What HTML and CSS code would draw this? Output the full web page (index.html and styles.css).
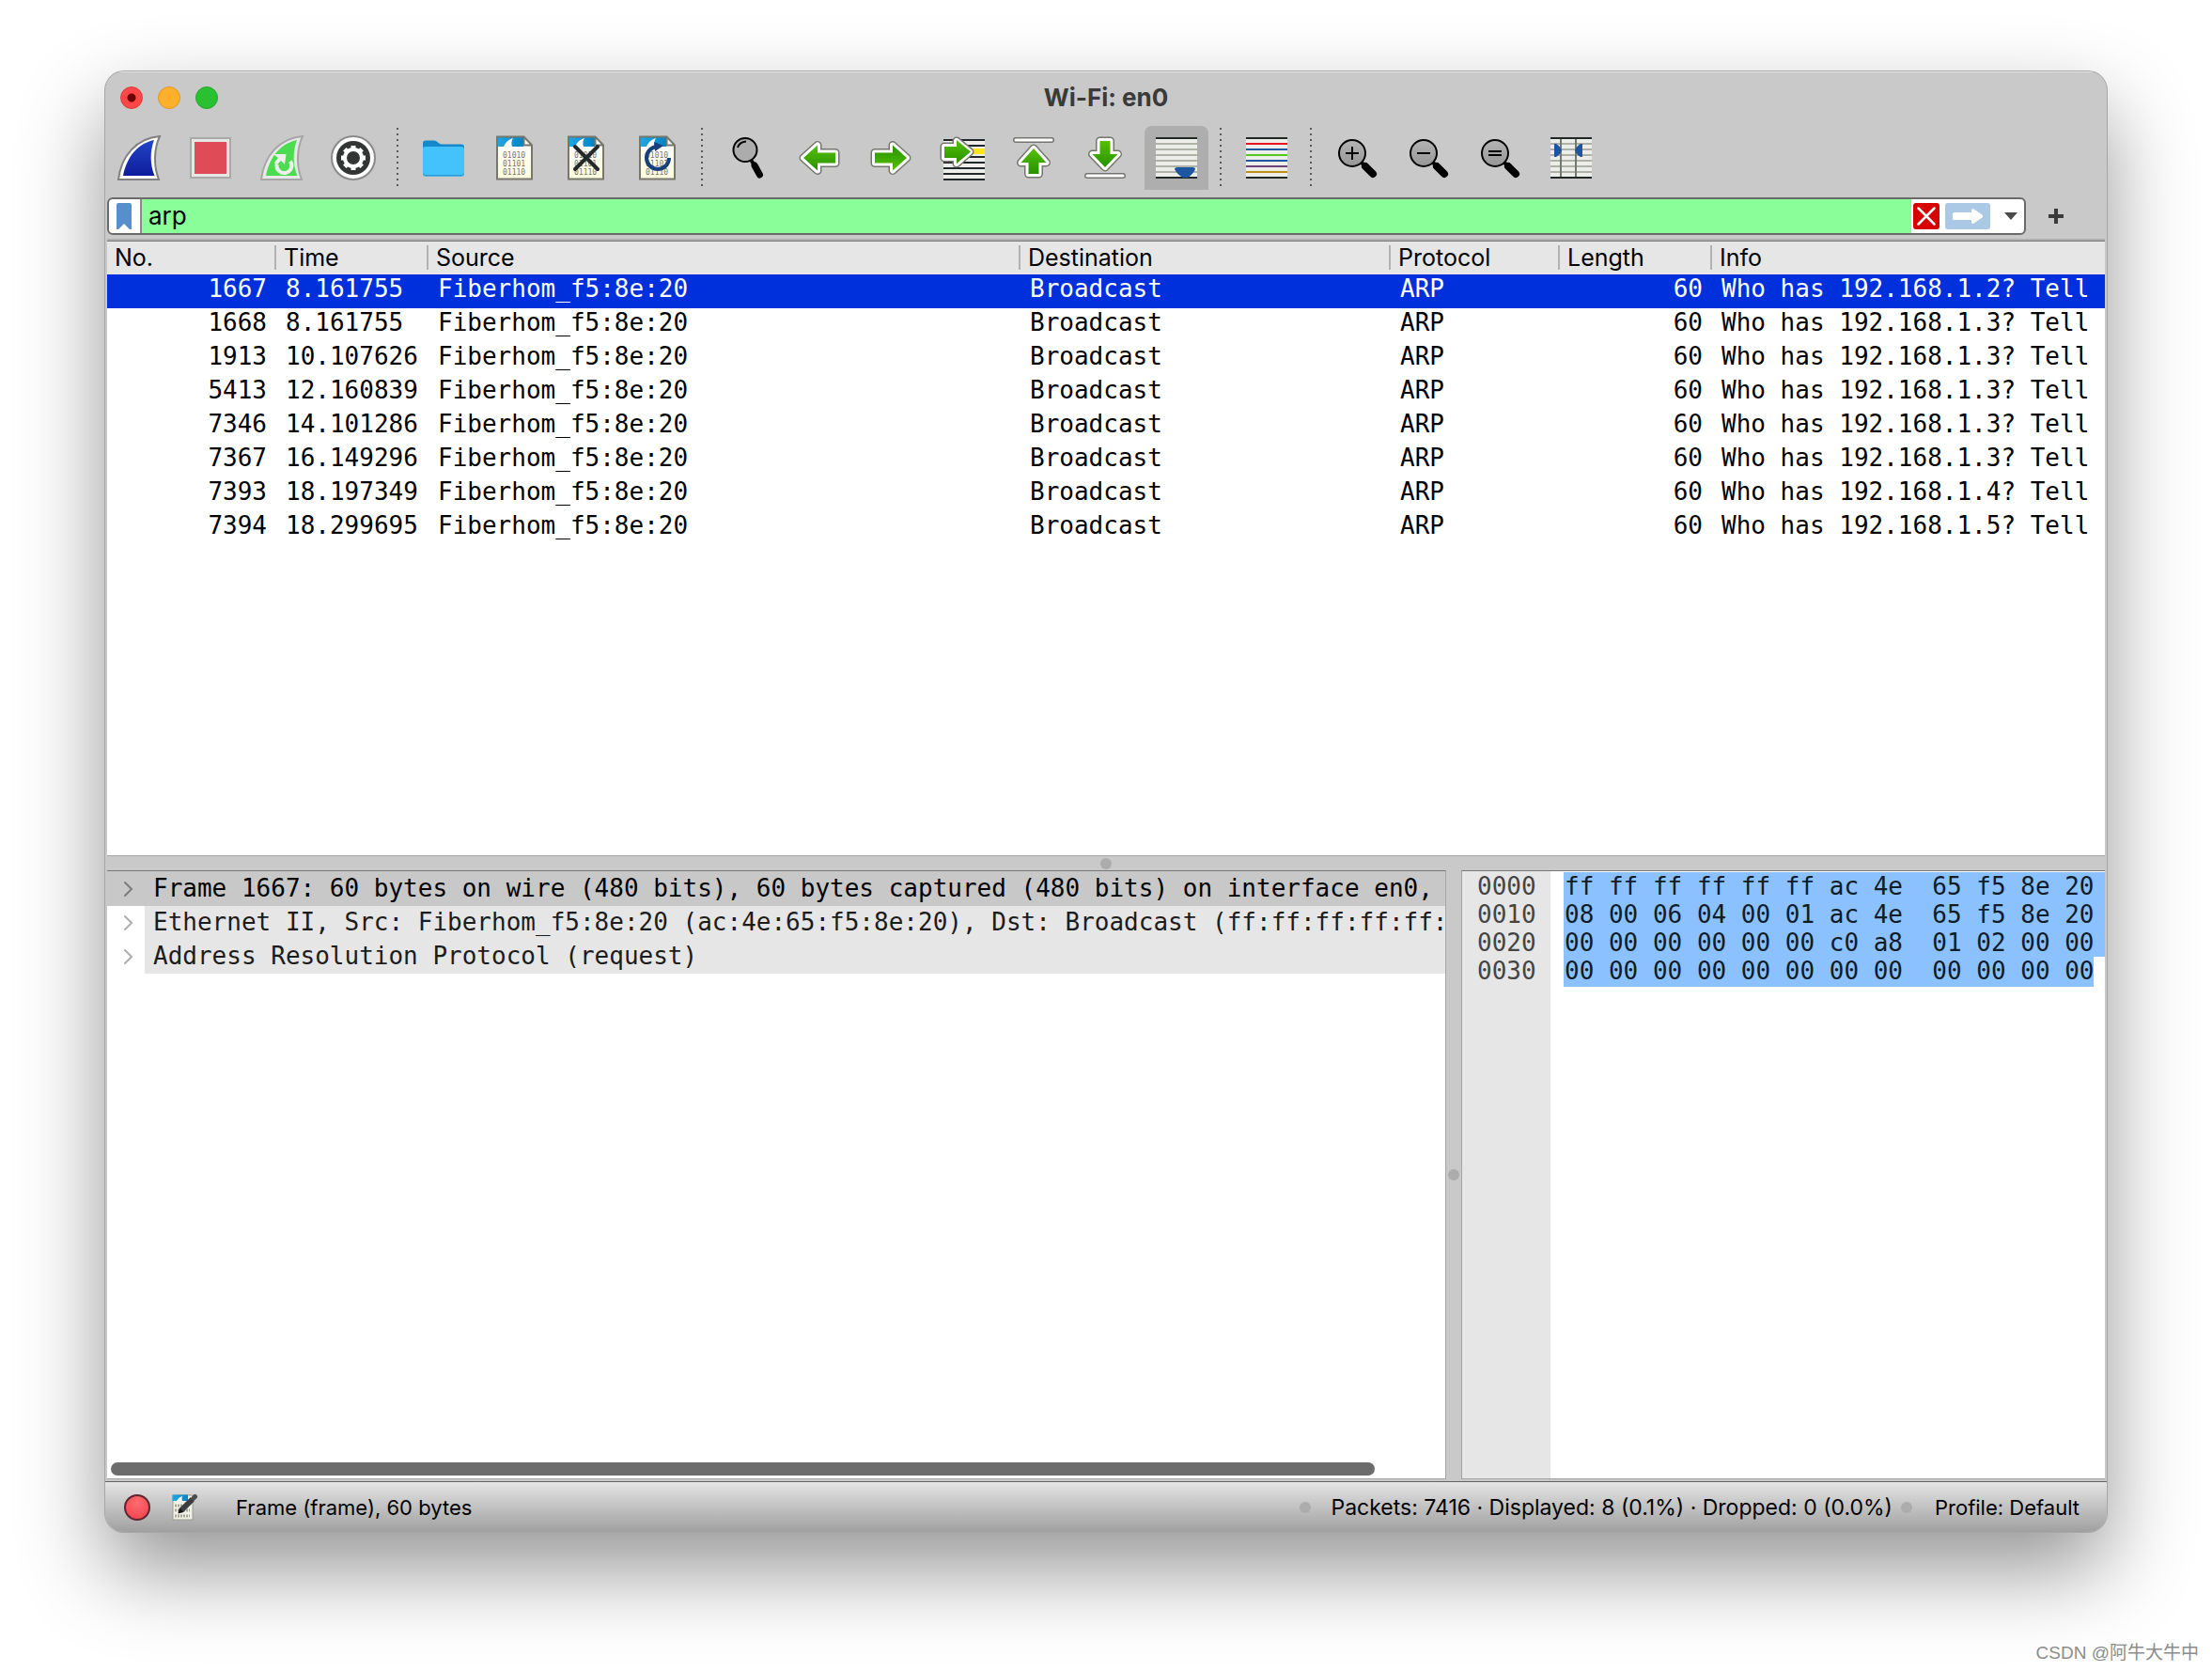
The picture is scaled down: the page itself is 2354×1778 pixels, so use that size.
FILE: index.html
```html
<!DOCTYPE html>
<html lang="en">
<head>
<meta charset="utf-8">
<title>Wi-Fi: en0</title>
<link rel="stylesheet" href="styles.css">
</head>
<body>
<svg class="defs" aria-hidden="true">
  <defs>
    <linearGradient id="g-blue" x1="0" y1="0" x2="0" y2="1"><stop offset="0" stop-color="#2346c8"/><stop offset="1" stop-color="#0d1c9c"/></linearGradient>
    <linearGradient id="g-green" x1="0" y1="0" x2="0" y2="1"><stop offset="0" stop-color="#55c000"/><stop offset="1" stop-color="#279200"/></linearGradient>
    <linearGradient id="g-cap" x1="0" y1="0" x2="1" y2="0"><stop offset="0" stop-color="#1fa8e4"/><stop offset="1" stop-color="#0583c4"/></linearGradient>
    <linearGradient id="g-paper" x1="0" y1="0" x2="0" y2="1"><stop offset="0" stop-color="#ffffff"/><stop offset="1" stop-color="#fdfbdc"/></linearGradient>
    <linearGradient id="g-lens" x1="0" y1="0" x2="0" y2="1"><stop offset="0" stop-color="#b4b4b4"/><stop offset="1" stop-color="#969696"/></linearGradient>
    <symbol id="file" viewBox="0 0 48 48">
      <path d="M5 1.5H33.500L42 10.500V46.500H5Z" fill="url(#g-paper)"/>
      <path d="M5 1.500H33V12H5Z" fill="url(#g-cap)"/>
      <path d="M12 12C14 7 18 4 22 3C20 6 20 9 21 12Z" fill="#fff"/>
      <path d="M33.500 1.500V10.500H42Z" fill="#fff"/>
      <path d="M5 1.500H33.500L42 10.500V46.500H5Z M33.500 1.500V10.500H42" fill="none" stroke="#77776c" stroke-width="2"/>
      <g class="bits"><text x="11" y="24">01010</text><text x="11" y="33">01101</text><text x="11" y="42">01110</text></g>
    </symbol>
    <symbol id="arrow" viewBox="0 0 48 48">
      <g stroke-linejoin="round">
        <path d="M7 24 22 10.500V18.500H41V29.500H22V37.500Z" fill="none" stroke="#757570" stroke-width="9"/>
        <path d="M7 24 22 10.500V18.500H41V29.500H22V37.500Z" fill="none" stroke="#fff" stroke-width="6"/>
        <path d="M7 24 22 10.500V18.500H41V29.500H22V37.500Z" fill="url(#g-green)"/>
      </g>
    </symbol>
    <symbol id="lens" viewBox="0 0 48 48">
      <circle cx="19" cy="19" r="14" fill="url(#g-lens)" stroke="#000" stroke-width="2"/>
      <path d="M29 29 33 33" stroke="#000" stroke-width="4"/>
      <path d="M33 33 41 41" stroke="#000" stroke-width="8" stroke-linecap="round"/>
    </symbol>
    <symbol id="sheet" viewBox="0 0 48 48">
      <path d="M2 2H46V46H2Z" fill="#edeeea"/>
      <path d="M2 9H46M2 15H46M2 21H46M2 27H46M2 33H46M2 39H46" stroke="#aeb1a5" stroke-width="2"/>
      <path d="M2 3H46M2 45H46" stroke="#202729" stroke-width="2"/>
    </symbol>
  </defs>
</svg>

<main class="window">
  <header class="titlebar">
    <div class="lights">
      <button class="light close" aria-label="Close"></button>
      <button class="light minimize" aria-label="Minimize"></button>
      <button class="light maximize" aria-label="Zoom window"></button>
    </div>
    <h1 class="title">Wi-Fi: en0</h1>
  </header>

  <nav class="toolbar" aria-label="Main toolbar">
    <button class="tool" aria-label="Start capture"><svg viewBox="0 0 48 48"><path d="M2 47C5 22 21 3 46 1C40 14 39 32 45 47Z" fill="#fff" stroke="#808080" stroke-width="2"/><path d="M7 43C11 23 22 9 40 5C35.500 17 35.500 31 40.500 43Z" fill="url(#g-blue)"/></svg></button>
    <button class="tool" aria-label="Stop capture"><svg viewBox="0 0 48 48"><path d="M3 3H45V45H3Z" fill="#e6e6e4" stroke="#a9a9a9" stroke-width="2"/><path d="M7 7H41V41H7Z" fill="#df4b57"/></svg></button>
    <button class="tool" aria-label="Restart capture"><svg viewBox="0 0 48 48"><path d="M2 47C5 22 21 3 46 1C40 14 39 32 45 47Z" fill="#e8e8e8" stroke="#a6a6a6" stroke-width="2"/><path d="M7 43C11 23 22 9 40 5C35.500 17 35.500 31 40.500 43Z" fill="#4bdc4f"/><path d="M18.500 31A8 8 0 1 0 33 27.500" fill="none" stroke="#eee" stroke-width="4"/><path d="M15 20H28.500L27 31 23 27 18 32 16 29 20 24Z" fill="#eee"/></svg></button>
    <button class="tool" aria-label="Capture options"><svg viewBox="0 0 48 48"><circle cx="24" cy="24" r="23" fill="#fff" stroke="#8a8a8a" stroke-width="2"/><circle cx="24" cy="24" r="18" fill="#333535"/><circle cx="24" cy="24" r="9" fill="none" stroke="#fff" stroke-width="4"/><g stroke="#fff" stroke-width="5"><path d="M24 11V16M24 32V37M11 24H16M32 24H37"/><path d="M24 11V16M24 32V37M11 24H16M32 24H37" transform="rotate(45 24 24)"/></g></svg></button>
    <span class="sep"></span>
    <button class="tool" aria-label="Open"><svg viewBox="0 0 48 48"><path d="M2 8Q2 5.500 5 5.500H14Q16 5.500 18 7.500T22 9.500H43Q46 9.500 46 12.500V20H2Z" fill="#1488c8"/><path d="M2 14Q2 12 5 12H43Q46 12 46 15V40Q46 43.500 43 43.500H5Q2 43.500 2 40Z" fill="#43c2fc"/><path d="M2 39V40Q2 43.500 5 43.500H43Q46 43.500 46 40V39Q46 42 43 42H5Q2 42 2 39Z" fill="#2a9ad8"/></svg></button>
    <button class="tool" aria-label="Save"><svg viewBox="0 0 48 48"><use href="#file"/></svg></button>
    <button class="tool" aria-label="Close file"><svg viewBox="0 0 48 48"><use href="#file"/><path d="M12 12 36 36M36 12 12 36" stroke="#23282b" stroke-width="4" stroke-linecap="round"/></svg></button>
    <button class="tool" aria-label="Reload"><svg viewBox="0 0 48 48"><use href="#file"/><path d="M24 12A12 12 0 1 0 36 24" fill="none" stroke="#173f7c" stroke-width="4"/><path d="M20 7 30 11 21 17Z" fill="#173f7c"/></svg></button>
    <span class="sep"></span>
    <button class="tool" aria-label="Find packet"><svg viewBox="0 0 48 48"><circle cx="21" cy="15.500" r="12.500" fill="#acacac" stroke="#000" stroke-width="2"/><path d="M13 13Q15 7 22 6.500" fill="none" stroke="#000" stroke-width="2"/><path d="M27 26 31 32" stroke="#000" stroke-width="4"/><path d="M31 32 36.500 42" stroke="#000" stroke-width="7" stroke-linecap="round"/></svg></button>
    <button class="tool" aria-label="Previous packet"><svg viewBox="0 0 48 48"><use href="#arrow"/></svg></button>
    <button class="tool" aria-label="Next packet"><svg viewBox="0 0 48 48"><use href="#arrow" transform="rotate(180 24 24)"/></svg></button>
    <button class="tool" aria-label="Go to packet"><svg viewBox="0 0 48 48"><path d="M4 4H48V48H4Z" fill="#edeeea"/><path d="M4 14H48V20H4Z" fill="#fde51a"/><path d="M4 5H48M4 11H48M4 23H48M4 29H48M4 35H48M4 41H48M4 47H48" stroke="#202729" stroke-width="2"/><g stroke-linejoin="round"><path d="M32 17.500 18 6V12H5V24H18V30Z" fill="none" stroke="#757570" stroke-width="9"/><path d="M32 17.500 18 6V12H5V24H18V30Z" fill="none" stroke="#fff" stroke-width="6"/><path d="M33 17.500 18 5V12H5V24H18V30Z" fill="url(#g-green)"/></g></svg></button>
    <button class="tool" aria-label="First packet"><svg viewBox="0 0 48 48"><path d="M5 5H43" stroke="#757570" stroke-width="6" stroke-linecap="round"/><path d="M5 5H43" stroke="#fff" stroke-width="3" stroke-linecap="round"/><g stroke-linejoin="round"><path d="M24 14 37.500 29H29.500V41H18.500V29H10.500Z" fill="none" stroke="#757570" stroke-width="9"/><path d="M24 14 37.500 29H29.500V41H18.500V29H10.500Z" fill="none" stroke="#fff" stroke-width="6"/><path d="M24 14 37.500 29H29.500V41H18.500V29H10.500Z" fill="url(#g-green)"/></g></svg></button>
    <button class="tool" aria-label="Last packet"><svg viewBox="0 0 48 48"><path d="M5 43H43" stroke="#757570" stroke-width="6" stroke-linecap="round"/><path d="M5 43H43" stroke="#fff" stroke-width="3" stroke-linecap="round"/><g stroke-linejoin="round"><path d="M24 34 37.500 20H29.500V6H18.500V20H10.500Z" fill="none" stroke="#757570" stroke-width="9"/><path d="M24 34 37.500 20H29.500V6H18.500V20H10.500Z" fill="none" stroke="#fff" stroke-width="6"/><path d="M24 34 37.500 20H29.500V6H18.500V20H10.500Z" fill="url(#g-green)"/></g></svg></button>
    <button class="tool pressed" aria-label="Auto scroll" aria-pressed="true"><svg viewBox="0 0 48 48"><use href="#sheet"/><path d="M22 36Q22 34 25 34H41Q44 34 44 36Q42 41 36 45H31Q25 42 22 36Z" fill="#1c55a0"/></svg></button>
    <span class="sep"></span>
    <button class="tool" aria-label="Colorize"><svg viewBox="0 0 48 48"><path d="M2 2H46V46H2Z" fill="#edeeea"/><g stroke-width="2"><path d="M2 3H46M2 45H46" stroke="#202729"/><path d="M2 9H46" stroke="#e8141f"/><path d="M2 15H46M2 27H46" stroke="#1f55a5"/><path d="M2 21H46" stroke="#54ca20"/><path d="M2 33H46" stroke="#6d4179"/><path d="M2 39H46" stroke="#bd8f12"/></g></svg></button>
    <span class="sep"></span>
    <button class="tool" aria-label="Zoom in"><svg viewBox="0 0 48 48"><use href="#lens"/><path d="M12 19H26M19 12V26" stroke="#000" stroke-width="2"/></svg></button>
    <button class="tool" aria-label="Zoom out"><svg viewBox="0 0 48 48"><use href="#lens"/><path d="M12 19H26" stroke="#000" stroke-width="2"/></svg></button>
    <button class="tool" aria-label="Normal size"><svg viewBox="0 0 48 48"><use href="#lens"/><path d="M12 17H26M12 21H26" stroke="#000" stroke-width="2"/></svg></button>
    <button class="tool" aria-label="Resize columns"><svg viewBox="0 0 48 48"><use href="#sheet"/><path d="M13 4V44M29 4V44" stroke="#757870" stroke-width="2"/><path d="M6 9H8Q12 11 14 16Q12 21 8 23H6ZM36 9H34Q30 11 28 16Q30 21 34 23H36Z" fill="#1c55a0"/></svg></button>
  </nav>

  <form class="filterbar">
    <div class="filterbox">
      <button type="button" class="mark" aria-label="Bookmarks"><svg viewBox="0 0 16 28" width="16" height="28"><path d="M0 2Q0 0 2 0H14Q16 0 16 2V28H14L8 22 2 28H0Z" fill="#568fcb"/></svg></button>
      <input class="filter" type="text" value="arp" aria-label="Display filter" spellcheck="false">
      <button type="button" class="clear" aria-label="Clear"><svg viewBox="0 0 28 28" width="28" height="28"><rect width="28" height="28" rx="3" fill="#d60000"/><path d="M5.500 5.500 22.500 22.500M22.500 5.500 5.500 22.500" stroke="#fff" stroke-width="2.500" stroke-linecap="round"/></svg></button>
      <button type="button" class="apply" aria-label="Apply"><svg viewBox="0 0 48 28" width="48" height="28"><rect width="48" height="28" rx="3" fill="#abc8e5"/><path d="M9.500 10H28V7.500Q28 6 30 6L40 13 40 15 30 22Q28 22 28 20.500V18H9.500Q8 18 8 16.500V11.500Q8 10 9.500 10Z" fill="#fff"/></svg></button>
      <button type="button" class="recent" aria-label="Recent filters"><svg viewBox="0 0 14 8" width="14" height="8"><path d="M0 0H14L7 8Z" fill="#4a4a4a"/></svg></button>
    </div>
    <button type="button" class="add" aria-label="Add filter button"><svg viewBox="0 0 16 16" width="16" height="16"><path d="M8 0V16M0 8H16" stroke="#3a3a3a" stroke-width="4"/></svg></button>
  </form>

  <section class="packets">
    <table class="list">
      <colgroup><col class="c-no"><col class="c-time"><col class="c-src"><col class="c-dst"><col class="c-proto"><col class="c-len"><col></colgroup>
      <thead><tr><th>No.</th><th>Time</th><th>Source</th><th>Destination</th><th>Protocol</th><th>Length</th><th>Info</th></tr></thead>
      <tbody>
        <tr class="selected"><td class="num">1667</td><td>8.161755</td><td>Fiberhom_f5:8e:20</td><td>Broadcast</td><td>ARP</td><td class="num">60</td><td>Who has 192.168.1.2? Tell</td></tr>
        <tr><td class="num">1668</td><td>8.161755</td><td>Fiberhom_f5:8e:20</td><td>Broadcast</td><td>ARP</td><td class="num">60</td><td>Who has 192.168.1.3? Tell</td></tr>
        <tr><td class="num">1913</td><td>10.107626</td><td>Fiberhom_f5:8e:20</td><td>Broadcast</td><td>ARP</td><td class="num">60</td><td>Who has 192.168.1.3? Tell</td></tr>
        <tr><td class="num">5413</td><td>12.160839</td><td>Fiberhom_f5:8e:20</td><td>Broadcast</td><td>ARP</td><td class="num">60</td><td>Who has 192.168.1.3? Tell</td></tr>
        <tr><td class="num">7346</td><td>14.101286</td><td>Fiberhom_f5:8e:20</td><td>Broadcast</td><td>ARP</td><td class="num">60</td><td>Who has 192.168.1.3? Tell</td></tr>
        <tr><td class="num">7367</td><td>16.149296</td><td>Fiberhom_f5:8e:20</td><td>Broadcast</td><td>ARP</td><td class="num">60</td><td>Who has 192.168.1.3? Tell</td></tr>
        <tr><td class="num">7393</td><td>18.197349</td><td>Fiberhom_f5:8e:20</td><td>Broadcast</td><td>ARP</td><td class="num">60</td><td>Who has 192.168.1.4? Tell</td></tr>
        <tr><td class="num">7394</td><td>18.299695</td><td>Fiberhom_f5:8e:20</td><td>Broadcast</td><td>ARP</td><td class="num">60</td><td>Who has 192.168.1.5? Tell</td></tr>
      </tbody>
    </table>
  </section>

  <div class="splitter horizontal"><span class="grip"></span></div>

  <div class="panes">
    <section class="details">
      <ul class="tree">
        <li class="node current"><svg class="chevron" viewBox="0 0 10 16"><path d="M1 1 8 8 1 15"/></svg><span class="label">Frame 1667: 60 bytes on wire (480 bits), 60 bytes captured (480 bits) on interface en0,</span></li>
        <li class="node"><svg class="chevron" viewBox="0 0 10 16"><path d="M1 1 8 8 1 15"/></svg><span class="label">Ethernet II, Src: Fiberhom_f5:8e:20 (ac:4e:65:f5:8e:20), Dst: Broadcast (ff:ff:ff:ff:ff:</span></li>
        <li class="node"><svg class="chevron" viewBox="0 0 10 16"><path d="M1 1 8 8 1 15"/></svg><span class="label">Address Resolution Protocol (request)</span></li>
      </ul>
      <div class="scroll"><span class="thumb"></span></div>
    </section>
    <div class="splitter vertical"><span class="grip"></span></div>
    <section class="hex">
      <div class="offsets"><div>0000</div><div>0010</div><div>0020</div><div>0030</div></div>
      <div class="bytes">
        <div class="line">ff ff ff ff ff ff ac 4e  65 f5 8e 20</div>
        <div class="line">08 00 06 04 00 01 ac 4e  65 f5 8e 20</div>
        <div class="line">00 00 00 00 00 00 c0 a8  01 02 00 00</div>
        <div class="line last">00 00 00 00 00 00 00 00  00 00 00 00</div>
      </div>
    </section>
  </div>

  <footer class="status">
    <button class="expert" aria-label="Expert information"></button>
    <button class="comment" aria-label="Capture comment"><svg viewBox="0 0 28 28" width="28" height="28"><path d="M1 1H22V27H1Z" fill="#f3f2e6" stroke="#9a9a92"/><path d="M0.500 0.500H17V7H0.500Z" fill="url(#g-cap)"/><path d="M5 7Q7 3 11 2 10 5 11 7Z" fill="#fff"/><path d="M3 12H13M3 17H19M3 23H19" stroke="#a5a59c" stroke-width="3" stroke-dasharray="2 1"/><path d="M10 17 22 5" stroke="#3c3f41" stroke-width="6"/><path d="M6.500 20.500 8 14.500 12.500 19Z" fill="#111"/><path d="M23.500 3.500 24.500 2.500" stroke="#4a4d50" stroke-width="5" stroke-linecap="round"/></svg></button>
    <span class="frame-info">Frame (frame), 60 bytes</span>
    <span class="grip"></span>
    <span class="counts">Packets: 7416 · Displayed: 8 (0.1%) · Dropped: 0 (0.0%)</span>
    <span class="grip"></span>
    <span class="profile">Profile: Default</span>
  </footer>
</main>
<p class="watermark">CSDN @阿牛大牛中</p>
</body>
</html>
```
FILE: styles.css
```css
* { box-sizing: border-box; }

body {
  margin: 0;
  min-height: 100vh;
  padding: 76px 112px 0;
  display: flex;
  flex-direction: column;
  background: #fff;
  color: #000;
  font-family: Inter, "Liberation Sans", sans-serif;
}

button {
  padding: 0;
  border: 0;
  background: none;
  display: flex;
  align-items: center;
  justify-content: center;
  flex: none;
}

.defs { position: absolute; width: 0; height: 0; }

.bits {
  font-family: "DejaVu Sans Mono", monospace;
  font-size: 8px;
  fill: #77776c;
}

/* Window frame */
.window {
  flex: 1;
  display: flex;
  flex-direction: column;
  border-radius: 20px;
  overflow: hidden;
  background: #c9c9c9;
  box-shadow: 0 0 0 1px #a6a6a6, 0 40px 90px rgba(0, 0, 0, 0.42);
}

.titlebar {
  display: grid;
  grid-template-columns: 1fr auto 1fr;
  align-items: center;
  height: 58px;
  padding: 0 16px 4px;
  border-top: 1px solid #e6e6e6;
}

.lights { display: flex; gap: 16px; }
.light { width: 24px; height: 24px; border-radius: 50%; }
.close { background: radial-gradient(circle, #6b0000 4px, #ff4747 5px); border: 1px solid #dd3a3a; }
.minimize { background: #ffb02b; border: 1px solid #dc9628; }
.maximize { background: #2bc032; border: 1px solid #26a52b; }

.title {
  margin: 0;
  font-size: 26px;
  line-height: 32px;
  font-weight: 700;
  color: #3a3a3a;
}

/* Toolbar */
.toolbar { display: flex; gap: 8px; padding: 0 2px; }
.tool { width: 68px; height: 68px; }
.tool svg { width: 48px; height: 48px; }
.pressed { background: #aeaeae; border-radius: 8px 8px 0 0; }
.sep {
  width: 12px;
  height: 62px;
  margin-top: 2px;
  background: repeating-linear-gradient(#5a5a5a 0 2px, transparent 2px 6px) 4px 0 / 2px 100% no-repeat;
}

/* Display filter */
.filterbar { display: flex; align-items: center; gap: 24px; padding: 8px 46px 4px 2px; }
.filterbox {
  flex: 1;
  display: flex;
  height: 40px;
  border: 2px solid #6a6a6a;
  border-radius: 6px;
  background: #fff;
  overflow: hidden;
}
.mark { width: 35px; padding-right: 2px; border-right: 2px solid #8a8a8a; }
.filter {
  flex: 1;
  min-width: 0;
  border: 0;
  padding: 0 7px;
  outline: 0;
  background: #8aff99;
  color: #000;
  font: 26px/36px Inter, sans-serif;
}
.clear { width: 32px; }
.apply { width: 56px; }
.recent { width: 32px; padding-left: 4px; }

/* Packet list */
.packets {
  flex: none;
  height: 657px;
  margin: 0 2px;
  border-top: 2px solid #b0b0b0;
  border-bottom: 1px solid #a5a5a5;
  background: #fff;
  overflow: hidden;
}
.list { width: 100%; table-layout: fixed; border-collapse: collapse; border-top: 1px solid #777; }
.c-no, .c-proto { width: 180px; }
.c-time, .c-len { width: 162px; }
.c-src { width: 630px; }
.c-dst { width: 394px; }

th {
  height: 35px;
  padding: 0 8px;
  text-align: left;
  font-size: 25px;
  line-height: 35px;
  font-weight: 400;
  background: linear-gradient(#b2b2b2, #b2b2b2) right 0 top 4px / 2px 26px no-repeat #e6e6e6;
}
th:last-child { background: #e6e6e6; }

td {
  height: 36px;
  padding: 0 0 6px 10px;
  font: 26px/30px "DejaVu Sans Mono", monospace;
  white-space: pre;
  overflow: hidden;
}
.num { text-align: right; padding-right: 10px; }
.selected { background: #002fdc; color: #fff; }

/* Splitters */
.splitter { display: flex; align-items: center; justify-content: center; flex: none; }
.horizontal { height: 15px; }
.vertical { width: 16px; }
.grip { width: 12px; height: 12px; border-radius: 50%; background: #acacac; flex: none; }

/* Detail and byte panes */
.panes { flex: 1; display: flex; padding: 0 2px 2px; }
.details {
  flex: 1;
  min-width: 0;
  display: flex;
  flex-direction: column;
  justify-content: space-between;
  border: solid #a5a5a5;
  border-width: 1px 1px 1px 0;
  border-top-color: #777;
  background: #fff;
  overflow: hidden;
}
.tree { margin: 0; padding: 0; list-style: none; font: 26px/34px "DejaVu Sans Mono", monospace; color: #1c1c1c; }
.node { display: flex; align-items: center; height: 36px; }
.chevron { width: 10px; height: 16px; margin: 0 12px 0 18px; flex: none; fill: none; stroke: #aeaeae; stroke-width: 2; stroke-linecap: round; }
.label { flex: 1; padding: 0 0 2px 9px; background: #e6e6e6; white-space: pre; }
.current { height: 37px; background: #c8c8c8; color: #000; }
.current .label { background: none; }
.current .chevron { stroke: #7c7c7c; }
.scroll { padding: 4px 4px 3px; }
.thumb { display: block; width: 95%; height: 14px; border-radius: 7px; background: #6c6c6c; }

.hex {
  width: 685px;
  display: flex;
  border: solid #a5a5a5;
  border-width: 1px 0 1px 1px;
  border-top-color: #777;
  background: #fff;
  font: 26px/30px "DejaVu Sans Mono", monospace;
}
.offsets { width: 94px; padding: 1px 16px; background: #e6e6e6; color: #444; }
.bytes { flex: 1; padding: 1px 0 0 14px; color: #101c28; overflow: hidden; }
.line { background: #8bc1ff; padding-left: 1px; white-space: pre; }
.last { width: 564px; padding-bottom: 2px; }

/* Status bar */
.status {
  display: flex;
  align-items: center;
  height: 54px;
  padding: 0 29px 0 20px;
  border-top: 1px solid #666;
  background: linear-gradient(#e4e4e4, #a0a0a0);
  font-size: 22px;
  line-height: 28px;
  white-space: nowrap;
}
.expert { width: 28px; height: 28px; border: 2px solid #5e2630; border-radius: 50%; background: radial-gradient(circle at 50% 30%, #ff6b70, #f0404c); }
.comment { margin-left: 23px; }
.frame-info { margin-left: 40px; flex: 1; }
.counts { margin: 0 9px 0 22px; font-size: 23px; }
.profile { margin-left: 24px; }

.watermark {
  margin: 0 -98px 0 0;
  height: 148px;
  display: flex;
  align-items: flex-end;
  justify-content: flex-end;
  padding-bottom: 5px;
  font: 19px/28px "Liberation Sans", "Noto Sans CJK SC", sans-serif;
  color: #8c8c8c;
  position: relative;
}
```
